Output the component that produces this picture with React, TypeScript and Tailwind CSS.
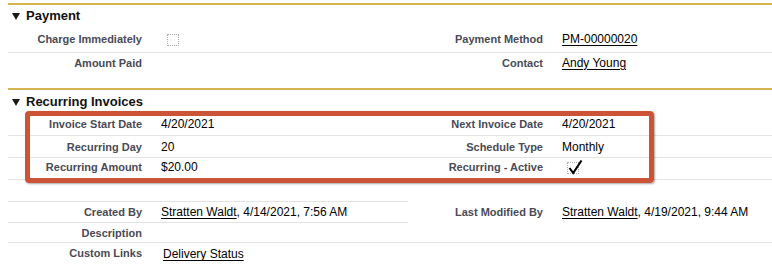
const label = "pr-2 text-right text-[11px] leading-[14px] font-bold text-[#4a4a56] whitespace-nowrap";
const value = "pl-[11px] text-[12px] leading-[14px] text-black whitespace-nowrap";
const line = "border-[#e3e3e3]";

type RowProps = {
  l1?: React.ReactNode;
  v1?: React.ReactNode;
  l2?: React.ReactNode;
  v2?: React.ReactNode;
  h: string;
  border?: boolean;
};

function Row({ l1, v1, l2, v2, h, border }: RowProps) {
  return (
    <div className={`grid grid-cols-[142px_258px_143px_1fr] items-center ${h} ${border ? `border-b ${line}` : ""}`}>
      <div className={label}>{l1}</div>
      <div className={value}>{v1}</div>
      <div className={label}>{l2}</div>
      <div className={value}>{v2}</div>
    </div>
  );
}

function SectionHeader({ title, h }: { title: string; h: string }) {
  return (
    <div className={`flex items-center gap-[6px] pl-[4px] ${h}`}>
      <svg width="8" height="7" viewBox="0 0 8 7" className="mt-[1px]">
        <polygon points="0,0 8,0 4,7" fill="#1a1a1a" />
      </svg>
      <h3 className="text-[13px] leading-[16px] font-bold text-[#111]">{title}</h3>
    </div>
  );
}

function Link({ children }: { children: React.ReactNode }) {
  return <span className="underline underline-offset-[2px] decoration-1">{children}</span>;
}

function Checkbox({ checked }: { checked?: boolean }) {
  return (
    <span className="relative inline-block w-[12px] h-[12px] align-middle border border-dotted border-[#a9a9a9]">
      {checked && (
        <svg width="16" height="16" viewBox="0 0 16 16" className="absolute left-[0px] top-[-4px] overflow-visible">
          <path d="M1.5 9 L5.2 14 L13.5 1.5" fill="none" stroke="#000" strokeWidth="2.1" strokeLinejoin="miter" />
        </svg>
      )}
    </span>
  );
}

export default function App() {
  return (
    <div className="relative w-[772px] h-[264px] overflow-hidden bg-white pt-[3px] font-['Liberation_Sans',Arial,sans-serif]">
      {/* Payment */}
      <section className="ml-2 border-t-2 border-[#d5b44f]">
        <SectionHeader title="Payment" h="h-[22px]" />
        <Row
          h="h-[26px] pb-[1px]"
          border
          l1="Charge Immediately"
          v1={<span className="ml-[6px]"><Checkbox /></span>}
          l2="Payment Method"
          v2={<Link>PM-00000020</Link>}
        />
        <Row h="h-[19px]" l1="Amount Paid" l2="Contact" v2={<Link>Andy Young</Link>} />
        <div className="h-[16px]" />
      </section>

      {/* Recurring Invoices */}
      <section className="ml-2 border-t-2 border-[#d5b44f]">
        <SectionHeader title="Recurring Invoices" h="h-[23px]" />
        <Row h="h-[23px]" border l1="Invoice Start Date" v1="4/20/2021" l2="Next Invoice Date" v2="4/20/2021" />
        <Row h="h-[22px]" border l1="Recurring Day" v1="20" l2="Schedule Type" v2="Monthly" />
        <Row
          h="h-[22px] pb-[3px]"
          border
          l1="Recurring Amount"
          v1="$20.00"
          l2="Recurring - Active"
          v2={<span className="ml-[5px]"><Checkbox checked /></span>}
        />
      </section>

      {/* System info */}
      <section className="ml-2 mt-[21px]">
        <div className="flex h-[22px]">
          <div className={`grid grid-cols-[142px_258px] items-center w-[400px] border-y ${line}`}>
            <div className={label}>Created By</div>
            <div className={value}>
              <Link>Stratten Waldt</Link>, 4/14/2021, 7:56 AM
            </div>
          </div>
          <div className="grid grid-cols-[143px_1fr] items-center flex-1">
            <div className={label}>Last Modified By</div>
            <div className={value}>
              <Link>Stratten Waldt</Link>, 4/19/2021, 9:44 AM
            </div>
          </div>
        </div>
        <Row h="h-[20px]" border l1="Description" />
        <Row h="h-[20px]" l1="Custom Links" v1={<span className="ml-[2px] inline-block pt-[2px]"><Link>Delivery Status</Link></span>} />
      </section>

      {/* highlight box */}
      <div className="absolute left-[25px] top-[111px] w-[629px] h-[72px] border-[5px] border-[#cd5336] rounded-[4px] shadow-[1px_1px_2px_rgba(0,0,0,0.35)]" />
    </div>
  );
}
